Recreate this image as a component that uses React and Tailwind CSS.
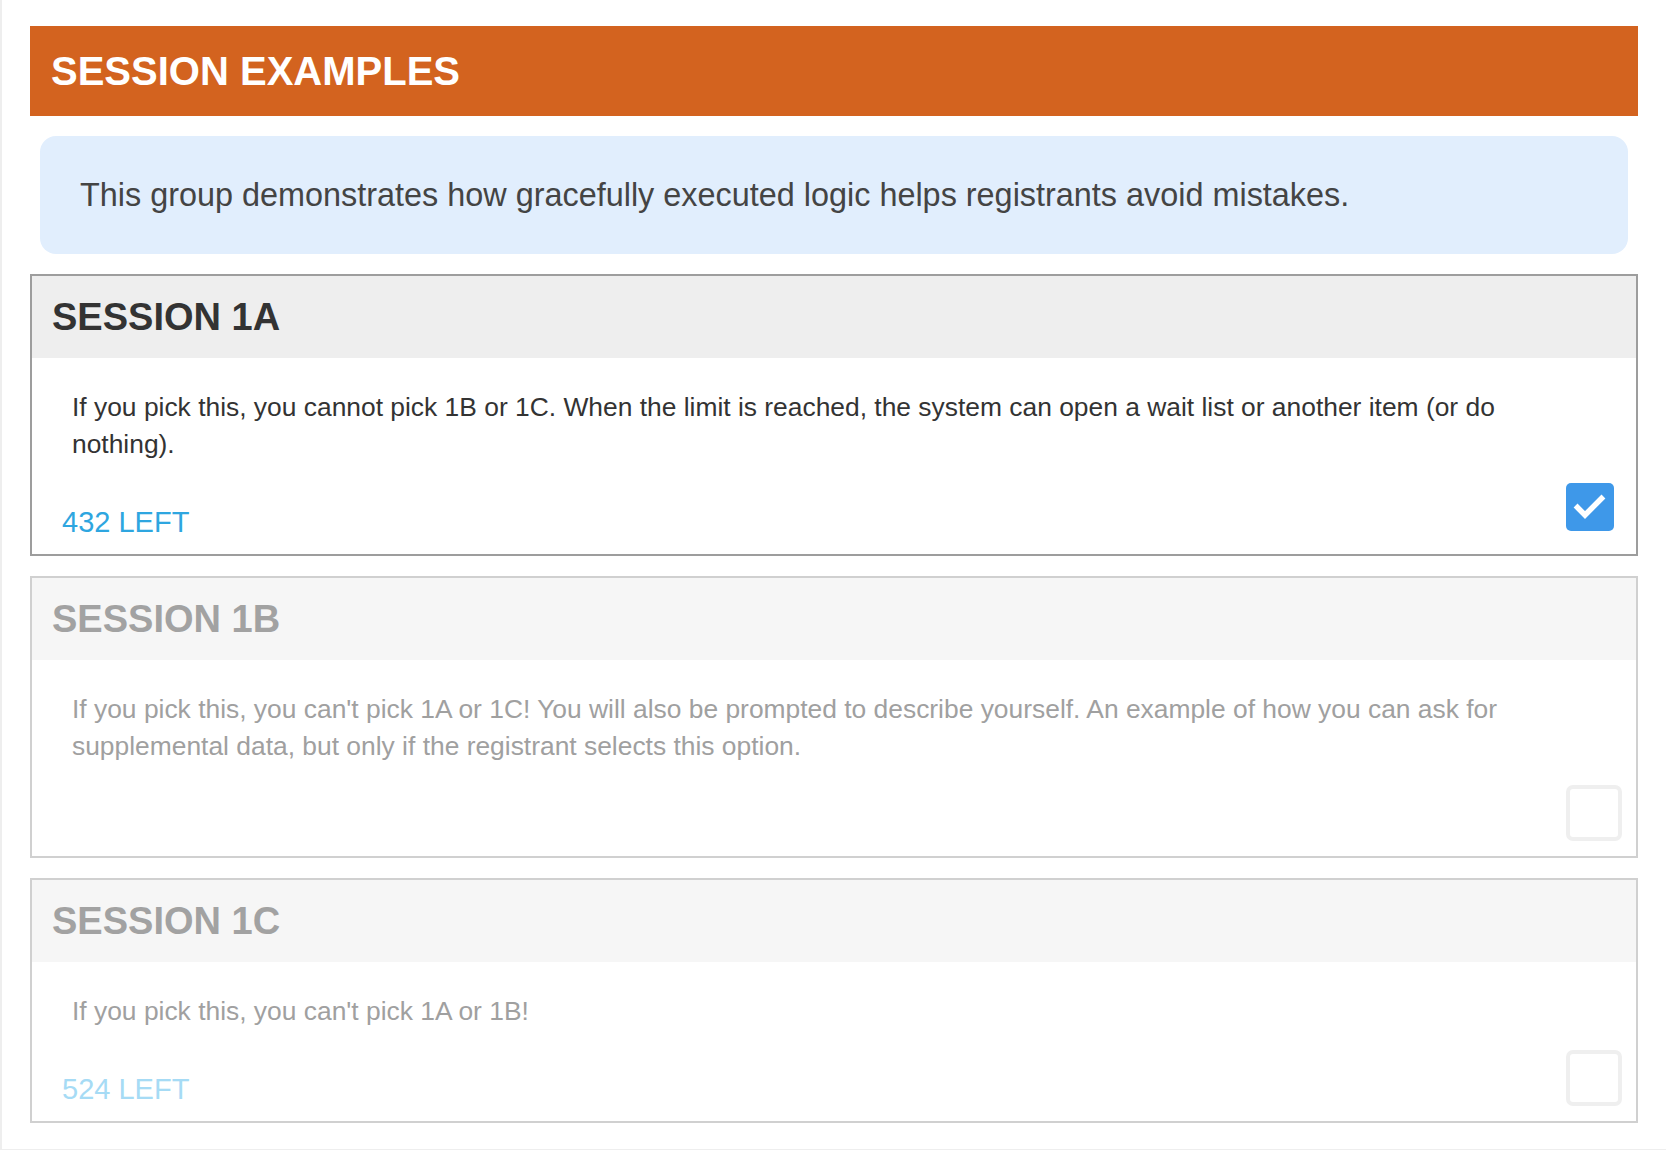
const sessions = [
    {
        id: '1A',
        text: 'If you pick this, you cannot pick 1B or 1C. When the limit is reached, the system can open a wait list or another item (or do nothing).',
        left: '432 LEFT',
        checked: true,
        disabled: false,
    },
    {
        id: '1B',
        text: "If you pick this, you can't pick 1A or 1C! You will also be prompted to describe yourself. An example of how you can ask for supplemental data, but only if the registrant selects this option.",
        left: null,
        checked: false,
        disabled: true,
    },
    {
        id: '1C',
        text: "If you pick this, you can't pick 1A or 1B!",
        left: '524 LEFT',
        checked: false,
        disabled: true,
    },
];

function Checkbox({ checked }) {
    return (
        <div className="w-[56px] h-[56px] shrink-0">
            {checked ? (
                <div className="w-[48px] h-[48px] rounded-[5px] bg-[#3e98e9] flex items-center justify-center">
                    <svg width="48" height="48" viewBox="0 0 48 48">
                        <path d="M11.5 24.5 L19 32 L35.5 15.5" fill="none" stroke="#fff" strokeWidth="5.5" strokeLinecap="square" />
                    </svg>
                </div>
            ) : (
                <div className="w-[56px] h-[56px] rounded-[7px] border-4 border-[#efefef] bg-white" />
            )}
        </div>
    );
}

function SessionCard({ session }) {
    const dim = session.disabled;
    return (
        <div className={`border-2 ${dim ? 'border-[#d0d0d0]' : 'border-[#9d9d9d]'} bg-white`}>
            <div className={`h-[82px] flex items-center px-[20px] ${dim ? 'bg-[#f6f6f6] text-[#a2a2a2]' : 'bg-[#eeeeee] text-[#333333]'}`}>
                <h2 className="text-[38px] font-bold leading-none">SESSION {session.id}</h2>
            </div>
            <div className="pt-[31px] pb-[15px] pl-[30px] pr-[14px]">
                <p className={`pl-[10px] pr-[50px] text-[26.4px] leading-[37px] ${dim ? 'text-[#a0a0a0]' : 'text-[#333333]'}`}>
                    {session.text}
                </p>
                <div className="mt-[20px] flex items-end justify-between">
                    <span className={`text-[29px] leading-[34px] ${dim ? 'text-[#a6dbf5]' : 'text-[#2ea6e0]'}`}>
                        {session.left}
                    </span>
                    <Checkbox checked={session.checked} />
                </div>
            </div>
        </div>
    );
}

export default function App() {
    return (
        <div className="min-h-screen bg-white" style={{ fontFamily: '"Liberation Sans", Arial, Helvetica, sans-serif' }}>
            <div className="border-l-2 border-b-2 border-[#eeeeee] pl-[28px] pr-[28px] pt-[26px] pb-[26px]">
                <div className="h-[90px] bg-[#d3631f] flex items-center px-[21px]">
                    <h1 className="text-white text-[40px] font-bold leading-none">SESSION EXAMPLES</h1>
                </div>
                <div className="mt-[20px] mx-[10px] h-[118px] rounded-2xl bg-[#e1eefd] flex items-center px-[40px]">
                    <p className="text-[32.4px] text-[#444444]">
                        This group demonstrates how gracefully executed logic helps registrants avoid mistakes.
                    </p>
                </div>
                <div className="mt-[20px] flex flex-col gap-[20px]">
                    {sessions.map((s) => (
                        <SessionCard key={s.id} session={s} />
                    ))}
                </div>
            </div>
        </div>
    );
}
